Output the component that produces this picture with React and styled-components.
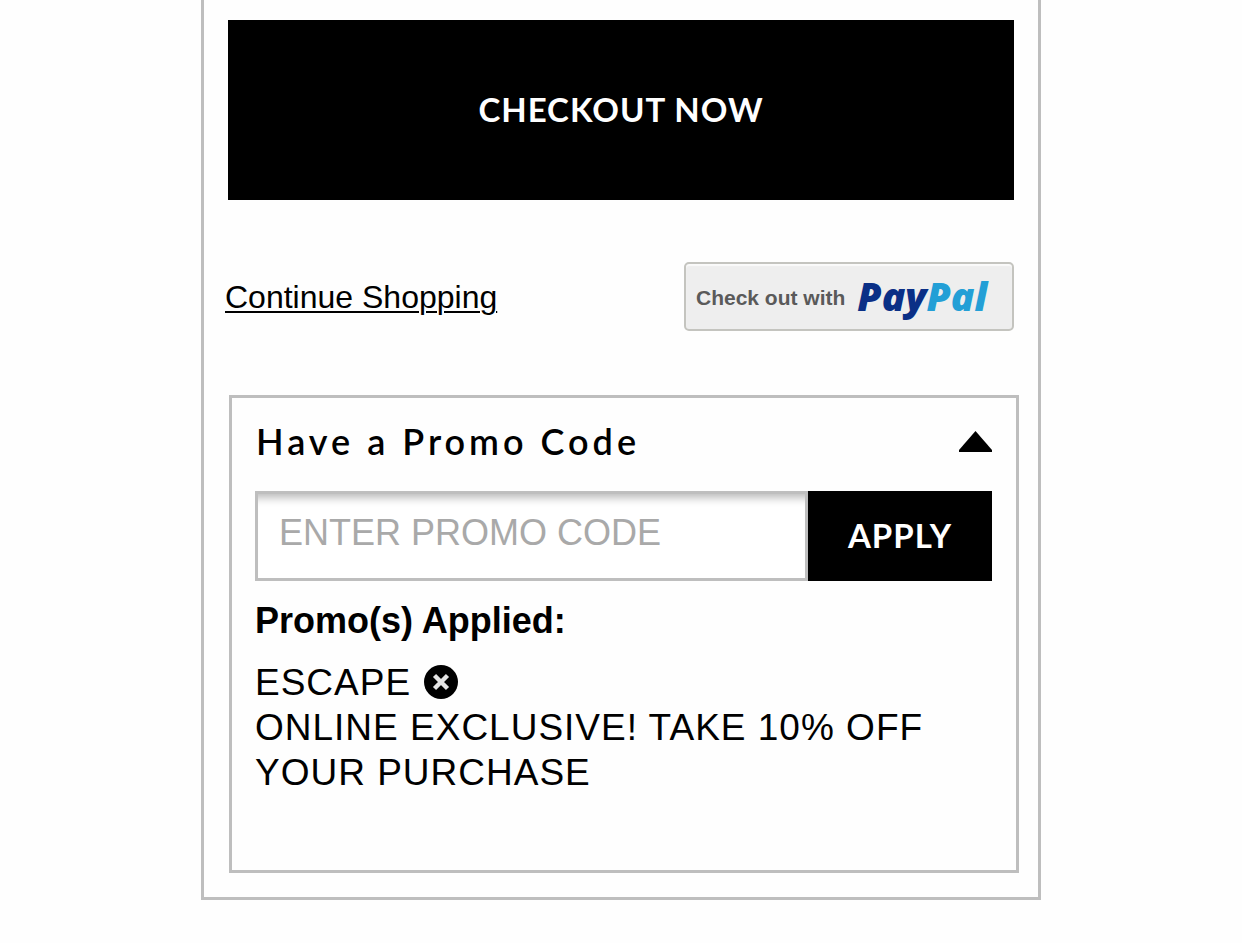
import { useState } from "react";
import styled, { createGlobalStyle } from "styled-components";

const GlobalStyle = createGlobalStyle`
  *, *::before, *::after {
    box-sizing: border-box;
  }

  body {
    margin: 0;
    background: #fefefe;
    color: #000;
    font-family: "Liberation Sans", Arial, sans-serif;
  }
`;

const Page = styled.main`
  padding: 0 20px 43px;
`;

const CartCard = styled.section`
  max-width: 840px;
  margin: 0 auto;
  padding: 20px 19px 24px 21px;
  border: 3px solid #bebebe;
  border-top: none;
`;

const BlackButton = styled.button`
  padding: 0 0 2px;
  border: none;
  background: #000;
  color: #fff;
  font-family: Lato, sans-serif;
  font-size: 33px;
  font-weight: 700;
  line-height: 40px;
  letter-spacing: 1px;
  text-transform: uppercase;
  cursor: pointer;
`;

const CheckoutRow = styled.div`
  display: grid;
  padding: 0 5px 0 3px;
`;

const CheckoutButton = styled(BlackButton)`
  padding: 69px 20px 71px;
`;

const OptionsRow = styled.div`
  display: flex;
  align-items: center;
  justify-content: space-between;
  gap: 20px;
  padding: 62px 5px 64px 0;
`;

const ShoppingLink = styled.a`
  color: #000;
  font-size: 32px;
  line-height: 40px;
  text-underline-offset: 3px;
  text-decoration-thickness: 2px;
`;

const PayPalButton = styled.button`
  display: flex;
  align-items: center;
  gap: 12px;
  width: 330px;
  height: 69px;
  padding: 2px 0 0 10px;
  border: 2px solid #c4c4bf;
  border-radius: 5px;
  background: #eee;
  box-shadow: inset 0 2px 1px #fafafa;
  color: #5a5a5a;
  font-family: "Liberation Sans", Arial, sans-serif;
  font-size: 21px;
  font-weight: 700;
  white-space: nowrap;
  cursor: pointer;
`;

const PayPalLogo = styled.span`
  padding-bottom: 3px;
  color: #0a2f86;
  font-family: "Open Sans", sans-serif;
  font-size: 39px;
  font-style: italic;
  font-weight: 800;
  line-height: 48px;
`;

const LogoTail = styled.span`
  color: #239fd6;
`;

const PromoBox = styled.section`
  margin-left: 4px;
  padding: 0 24px 75px 23px;
  border: 3px solid #bebebe;
`;

const PromoHeading = styled.h2`
  margin: 0;
`;

const PromoToggle = styled.button`
  display: flex;
  align-items: center;
  justify-content: space-between;
  width: 100%;
  padding: 19px 0 26px 1px;
  border: none;
  background: none;
  color: #000;
  font-family: Lato, sans-serif;
  font-size: 36px;
  font-weight: 600;
  line-height: 48px;
  letter-spacing: 4px;
  text-align: left;
  cursor: pointer;
`;

const Arrow = styled.svg`
  width: 33px;
  height: 21px;
  transform: ${({ $open }) => ($open ? "none" : "rotate(180deg)")};
`;

const PromoForm = styled.form`
  display: flex;
  height: 90px;
`;

const PromoInput = styled.input`
  flex: 1;
  min-width: 0;
  padding: 0 21px 6px;
  border: 3px solid #bebebe;
  border-radius: 0;
  background: #fff;
  box-shadow: inset 0 12px 8px -8px #bbb;
  font-family: "Liberation Sans", Arial, sans-serif;
  font-size: 36px;

  &::placeholder {
    color: #a9a9a9;
    opacity: 1;
  }
`;

const ApplyButton = styled(BlackButton)`
  width: 184px;
`;

const AppliedTitle = styled.h3`
  margin: 17px 0;
  font-size: 36px;
  font-weight: 700;
  line-height: 45px;
`;

const PromoText = styled.p`
  display: flex;
  align-items: center;
  gap: 13px;
  margin: 0;
  font-size: 37px;
  line-height: 45px;
  letter-spacing: 1px;
`;

const RemoveButton = styled.button`
  display: flex;
  padding: 0 0 2px;
  border: none;
  background: none;
  cursor: pointer;
`;

function RemoveIcon() {
  return (
    <svg width="34" height="34" viewBox="0 0 34 34" aria-hidden="true">
      <circle cx="17" cy="17" r="17" fill="#000" />
      <path d="M10.5 10.5L23.5 23.5M23.5 10.5L10.5 23.5" stroke="#e4e4e4" strokeWidth="4.4" />
    </svg>
  );
}

function App() {
  const [open, setOpen] = useState(true);
  const [code, setCode] = useState("");
  const [promos, setPromos] = useState([
    { code: "ESCAPE", text: "ONLINE EXCLUSIVE! TAKE 10% OFF YOUR PURCHASE" },
  ]);

  const removePromo = (name) => {
    setPromos(promos.filter((promo) => promo.code !== name));
  };

  return (
    <Page>
      <GlobalStyle />
      <CartCard>
        <CheckoutRow>
          <CheckoutButton type="button">Checkout Now</CheckoutButton>
        </CheckoutRow>

        <OptionsRow>
          <ShoppingLink href="#shop">Continue Shopping</ShoppingLink>
          <PayPalButton type="button">
            Check out with
            <PayPalLogo>
              Pay<LogoTail>Pal</LogoTail>
            </PayPalLogo>
          </PayPalButton>
        </OptionsRow>

        <PromoBox>
          <PromoHeading>
            <PromoToggle type="button" aria-expanded={open} onClick={() => setOpen(!open)}>
              Have a Promo Code
              <Arrow $open={open} viewBox="0 0 33 21" aria-hidden="true">
                <path d="M16.5 0L33 19V21H0V19Z" />
              </Arrow>
            </PromoToggle>
          </PromoHeading>

          {open && (
            <>
              <PromoForm onSubmit={(e) => e.preventDefault()}>
                <PromoInput
                  type="text"
                  aria-label="Promo code"
                  placeholder="ENTER PROMO CODE"
                  value={code}
                  onChange={(e) => setCode(e.target.value)}
                />
                <ApplyButton type="submit">Apply</ApplyButton>
              </PromoForm>

              <AppliedTitle>Promo(s) Applied:</AppliedTitle>
              {promos.map((promo) => (
                <div key={promo.code}>
                  <PromoText>
                    {promo.code}
                    <RemoveButton
                      type="button"
                      aria-label={`Remove ${promo.code}`}
                      onClick={() => removePromo(promo.code)}
                    >
                      <RemoveIcon />
                    </RemoveButton>
                  </PromoText>
                  <PromoText>{promo.text}</PromoText>
                </div>
              ))}
            </>
          )}
        </PromoBox>
      </CartCard>
    </Page>
  );
}

export default App;
